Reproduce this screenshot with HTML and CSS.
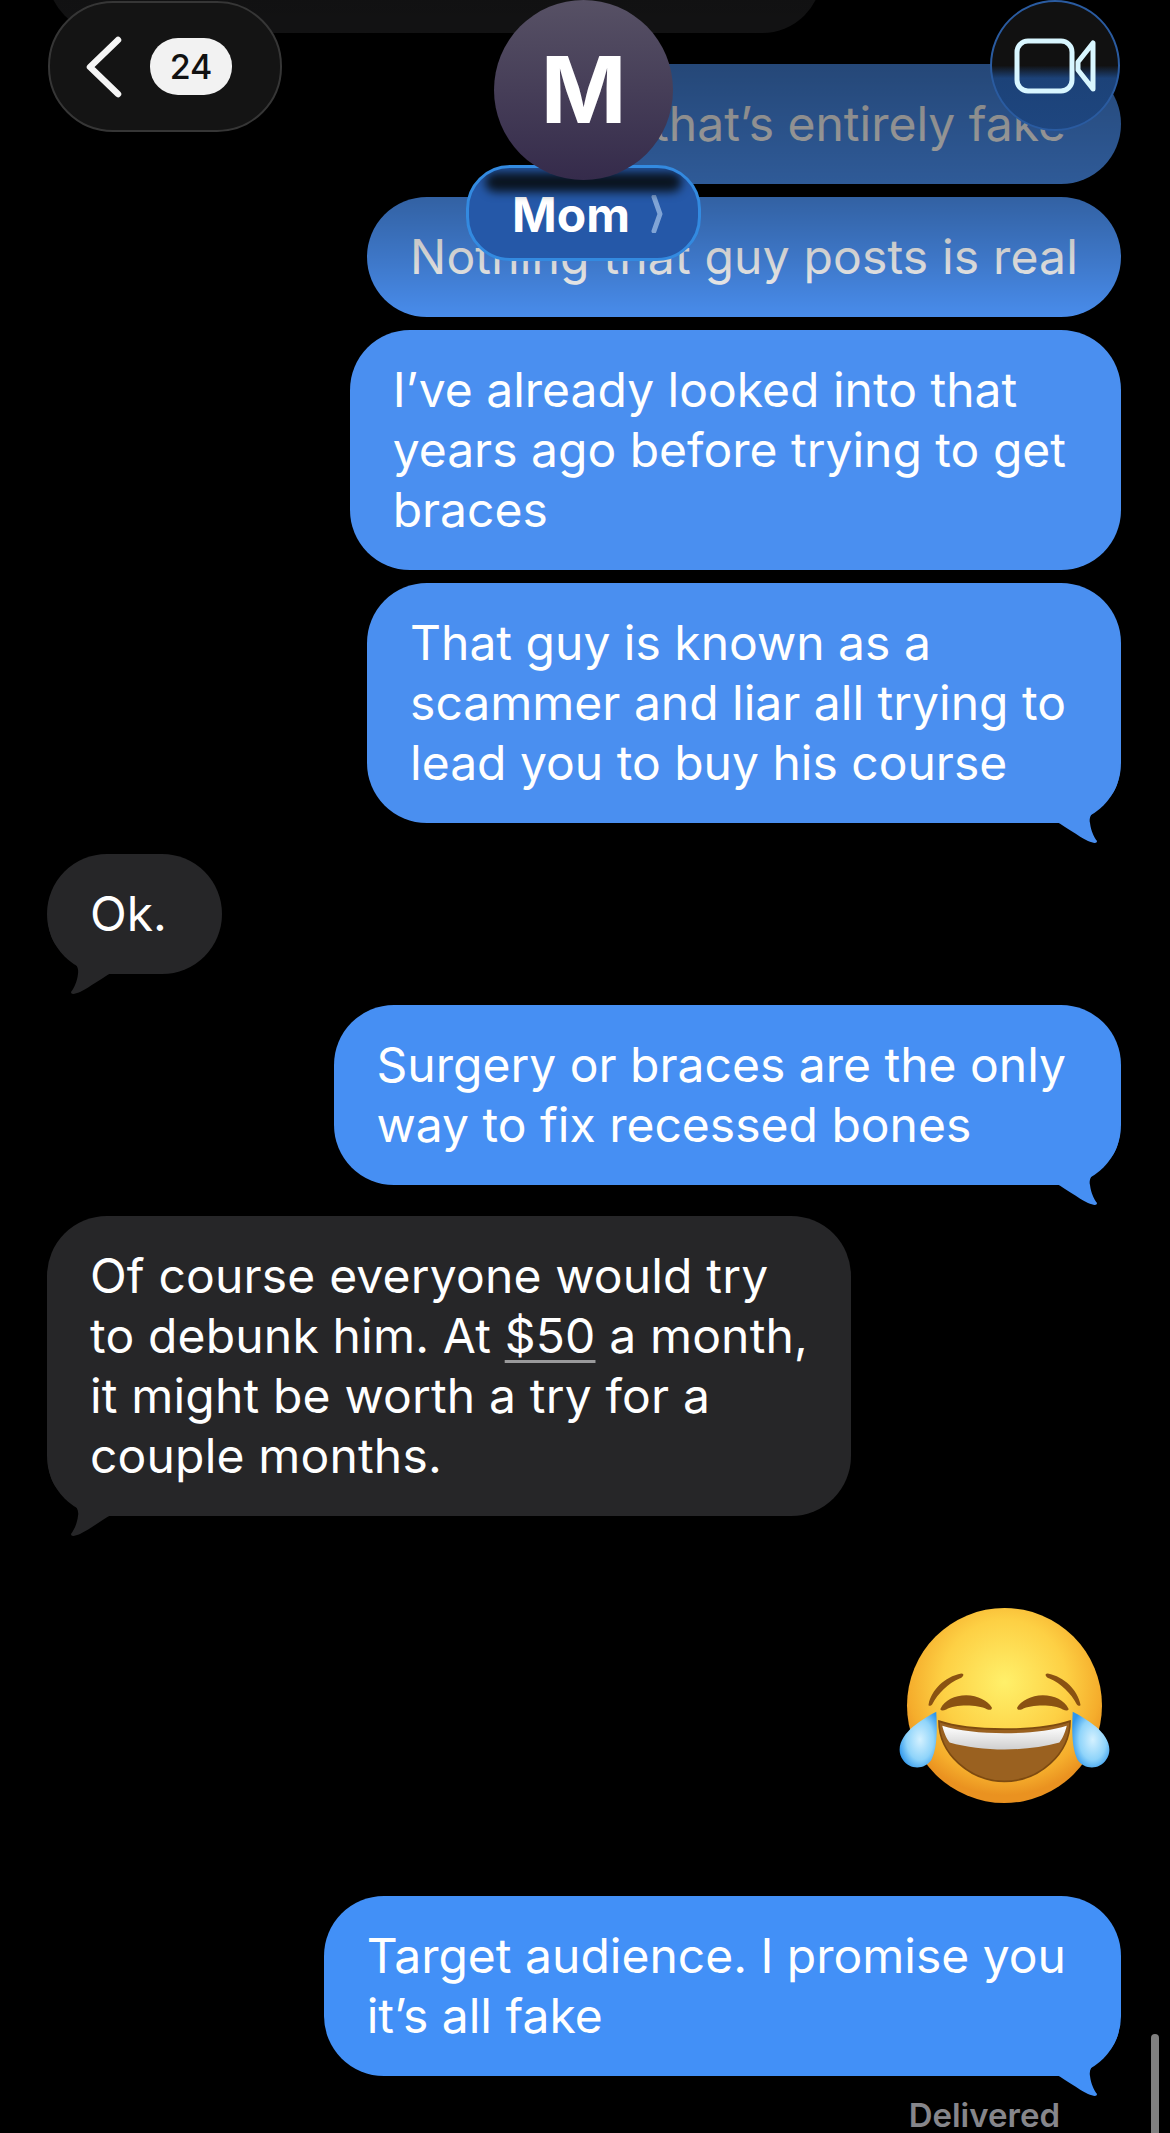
FILE: index.html
```html
<!DOCTYPE html>
<html lang="en">

<head>
    <meta charset="UTF-8">
    <meta name="viewport" content="width=device-width, initial-scale=1.0">
    <title>Mom</title>
    <link rel="stylesheet" href="styles.css">
</head>

<body>
    <svg class="defs" width="0" height="0">
        <symbol id="tail" viewBox="0 0 72 100">
            <path d="M70 20C70 35 66 46 58 54C48 63 38 68 40 78C41 86 44 92 47 96C47 99 43 98 38 96C28 91 16 82 7 77L0 77L0 20Z" />
        </symbol>
    </svg>

    <main class="thread">
        <div class="bubble in first">&nbsp;</div>
        <div class="bubble out upper roomy group-start">that’s entirely fake</div>
        <div class="bubble out upper wide">Nothing that guy posts is real</div>
        <div class="bubble out upper roomy">I’ve already looked into that<br>years ago before trying to get<br>braces</div>
        <div class="bubble out upper roomy has-tail">That guy is known as a<br>scammer and liar all trying to<br>lead you to buy his course
            <svg class="tail"><use href="#tail" /></svg>
        </div>
        <div class="bubble in roomy has-tail group-start">Ok.
            <svg class="tail"><use href="#tail" /></svg>
        </div>
        <div class="bubble out roomy has-tail group-start">Surgery or braces are the only<br>way to fix recessed bones
            <svg class="tail"><use href="#tail" /></svg>
        </div>
        <div class="bubble in wide has-tail group-start">Of course everyone would try<br>to debunk him. At <span class="link">$50</span> a month,<br>it might be worth a try for a<br>couple months.
            <svg class="tail"><use href="#tail" /></svg>
        </div>

        <svg class="emoji" viewBox="110 80 650 595">
            <defs>
                <radialGradient id="face" cx="50%" cy="38%" r="58%">
                    <stop offset="0" stop-color="#fff06a" />
                    <stop offset="0.55" stop-color="#fdd044" />
                    <stop offset="0.85" stop-color="#f5ad2c" />
                    <stop offset="1" stop-color="#ea9220" />
                </radialGradient>
                <linearGradient id="teeth" x1="0" y1="0" x2="0" y2="1">
                    <stop offset="0" stop-color="#ffffff" />
                    <stop offset="1" stop-color="#cfcfcf" />
                </linearGradient>
                <radialGradient id="tear" cx="55%" cy="50%" r="60%">
                    <stop offset="0" stop-color="#d4f1ff" />
                    <stop offset="0.6" stop-color="#8fd4fa" />
                    <stop offset="1" stop-color="#2f97ec" />
                </radialGradient>
            </defs>
            <circle cx="435" cy="376" r="293" fill="url(#face)" />
            <g fill="#8a5212">
                <path d="M207 372C215 330 255 290 305 280C316 280 312 291 300 295C265 310 235 340 218 372C213 379 205 378 207 372Z" />
                <path d="M663 372C655 330 615 290 565 280C554 280 558 291 570 295C605 310 635 340 652 372C657 379 665 378 663 372Z" />
                <path d="M243 385C255 360 285 345 320 345C355 345 385 362 397 382C398 390 390 390 382 387C355 373 285 372 260 388C250 392 240 392 243 385Z" />
                <path d="M627 385C615 360 585 345 550 345C515 345 485 362 473 382C472 390 480 390 488 387C515 373 585 372 610 388C620 392 630 392 627 385Z" />
            </g>
            <path d="M238 423C330 455 540 455 632 423C632 520 540 604 435 604C330 604 238 520 238 423Z" fill="#9a6120" stroke="#7d4a10" stroke-width="5" />
            <path d="M248 437C340 467 530 467 622 437C618 455 610 475 600 487C500 515 370 515 270 487C260 475 252 455 248 437Z" fill="url(#teeth)" />
            <path d="M230 395C232 440 235 500 215 540C195 570 150 570 130 540C105 505 130 465 160 440C185 420 210 405 230 395Z" fill="url(#tear)" />
            <path d="M640 395C638 440 635 500 655 540C675 570 720 570 740 540C765 505 740 465 710 440C685 420 660 405 640 395Z" fill="url(#tear)" />
        </svg>

        <div class="bubble out lower roomy has-tail">Target audience. I promise you<br>it’s all fake
            <svg class="tail"><use href="#tail" /></svg>
        </div>
        <div class="delivered">Delivered</div>
    </main>

    <div class="fade"></div>

    <header class="topbar">
        <div class="back">
            <svg class="chevron" viewBox="0 0 40 62">
                <path d="M34 4L6 31L34 58" />
            </svg>
            <span class="badge">24</span>
        </div>
        <div class="contact">
            <div class="avatar">M</div>
            <div class="name">Mom
                <svg class="name-arrow" viewBox="0 0 12 38">
                    <path d="M3 2L9 19L3 36" />
                </svg>
            </div>
        </div>
        <div class="video">
            <svg class="video-icon" viewBox="0 0 82 56">
                <rect x="3" y="3" width="55" height="50" rx="11" />
                <path d="M64 24L79 5V51L64 32Z" />
            </svg>
        </div>
    </header>

    <div class="scrollbar"></div>
</body>

</html>
```

FILE: styles.css
```css
html,
body {
    margin: 0;
    padding: 0;
    background-color: #000;
}

body {
    position: relative;
    height: 2133px;
    overflow: hidden;
    font-family: Inter, 'Liberation Sans', sans-serif;
}

.defs {
    position: absolute;
}

/* Messages */
.thread {
    display: flex;
    flex-direction: column;
    align-items: flex-start;
    gap: 13px;
    padding: 0 49px 0 47px;
    margin-top: -87px;
}

.bubble {
    position: relative;
    isolation: isolate;
    padding: 30px 43px;
    border-radius: 60px;
    font-size: 48px;
    line-height: 60px;
    color: #fff;
    white-space: nowrap;
}

.bubble.roomy {
    padding-right: 55px;
}

.bubble.wide {
    letter-spacing: .17px;
}

.bubble.out {
    align-self: flex-end;
    background-color: #468ff3;
    fill: #468ff3;
}

.bubble.upper {
    background-color: #4a8ff0;
    fill: #4a8ff0;
}

.bubble.lower {
    background-color: #4290f7;
    fill: #4290f7;
}

.bubble.in {
    background-color: #262628;
    fill: #262628;
}

.bubble.first {
    box-sizing: border-box;
    width: 775px;
}

.group-start {
    margin-top: 18px;
}

.tail {
    position: absolute;
    z-index: -1;
    width: 72px;
    height: 100px;
    bottom: -22px;
    pointer-events: none;
}

.out .tail {
    right: -1px;
}

.in .tail {
    left: -1px;
    transform: scaleX(-1);
}

.link {
    text-decoration: underline 3px #9a9a9c;
    text-decoration-skip-ink: none;
    text-underline-offset: 7px;
}

.emoji {
    align-self: flex-end;
    width: 217px;
    height: 198px;
    margin: 78px 8px 78px 0;
}

.delivered {
    align-self: flex-end;
    margin: 6px 61px 0 0;
    font-size: 33px;
    font-weight: 600;
    color: #86868b;
}

/* Top fade over the messages */
.fade {
    position: absolute;
    top: 0;
    left: 0;
    right: 0;
    height: 325px;
    background: linear-gradient(to bottom,
            rgba(0, 0, 0, .55) 0,
            rgba(0, 0, 0, .5) 64px,
            rgba(0, 0, 0, .37) 184px,
            rgba(0, 0, 0, .32) 197px,
            rgba(0, 0, 0, .18) 255px,
            rgba(0, 0, 0, 0) 325px);
}

/* Header */
.topbar {
    position: absolute;
    top: 0;
    left: 0;
    right: 0;
    display: flex;
    align-items: flex-start;
    padding-left: 48px;
}

.back {
    display: flex;
    align-items: center;
    box-sizing: border-box;
    width: 234px;
    height: 131px;
    margin-top: 1px;
    padding-left: 34px;
    gap: 26px;
    background-color: #141414;
    border: 2px solid #363636;
    border-radius: 65px;
}

.chevron {
    width: 40px;
    height: 62px;
    fill: none;
    stroke: #f5f5f5;
    stroke-width: 6.5;
    stroke-linecap: round;
    stroke-linejoin: round;
}

.badge {
    width: 82px;
    height: 57px;
    border-radius: 28px;
    background-color: #f2f2f2;
    color: #111;
    font-size: 34px;
    font-weight: 500;
    line-height: 57px;
    text-align: center;
}

.contact {
    display: flex;
    flex-direction: column;
    align-items: center;
    width: 235px;
    margin-left: 184px;
}

.avatar {
    position: relative;
    z-index: 1;
    width: 179px;
    height: 180px;
    border-radius: 50%;
    background: linear-gradient(to bottom, #575165, #352b4b);
    color: #fff;
    font-size: 92px;
    font-weight: 700;
    line-height: 180px;
    text-align: center;
}

.name {
    position: relative;
    display: flex;
    align-items: center;
    box-sizing: border-box;
    width: 235px;
    height: 96px;
    margin-top: -15px;
    padding: 2px 0 0 43px;
    gap: 21px;
    overflow: hidden;
    background-color: #2558a8;
    border: 3px solid #338ae0;
    border-radius: 44px;
    color: #fff;
    font-size: 48px;
    font-weight: 700;
}

.name::before {
    content: "";
    position: absolute;
    top: 4px;
    left: 16px;
    right: 16px;
    height: 20px;
    border-radius: 10px;
    background-color: #0a1420;
    filter: blur(5px);
}

.name-arrow {
    width: 12px;
    height: 38px;
    fill: none;
    stroke: rgba(190, 215, 245, .6);
    stroke-width: 5;
    stroke-linecap: round;
    stroke-linejoin: round;
}

.video {
    display: flex;
    align-items: center;
    justify-content: center;
    box-sizing: border-box;
    width: 130px;
    height: 131px;
    margin-left: auto;
    margin-right: 50px;
    border: 2px solid #2a5ba0;
    border-radius: 50%;
    background: linear-gradient(to bottom, #111 0, #111 50%, #1c4278 60%, #1e467f 100%);
}

.video-icon {
    width: 82px;
    height: 56px;
    fill: none;
    stroke: #d8f6ff;
    stroke-width: 5;
    stroke-linejoin: round;
}

.scrollbar {
    position: absolute;
    right: 11px;
    bottom: 0;
    width: 8px;
    height: 99px;
    border-radius: 4px 4px 0 0;
    background-color: #808080;
}
```
